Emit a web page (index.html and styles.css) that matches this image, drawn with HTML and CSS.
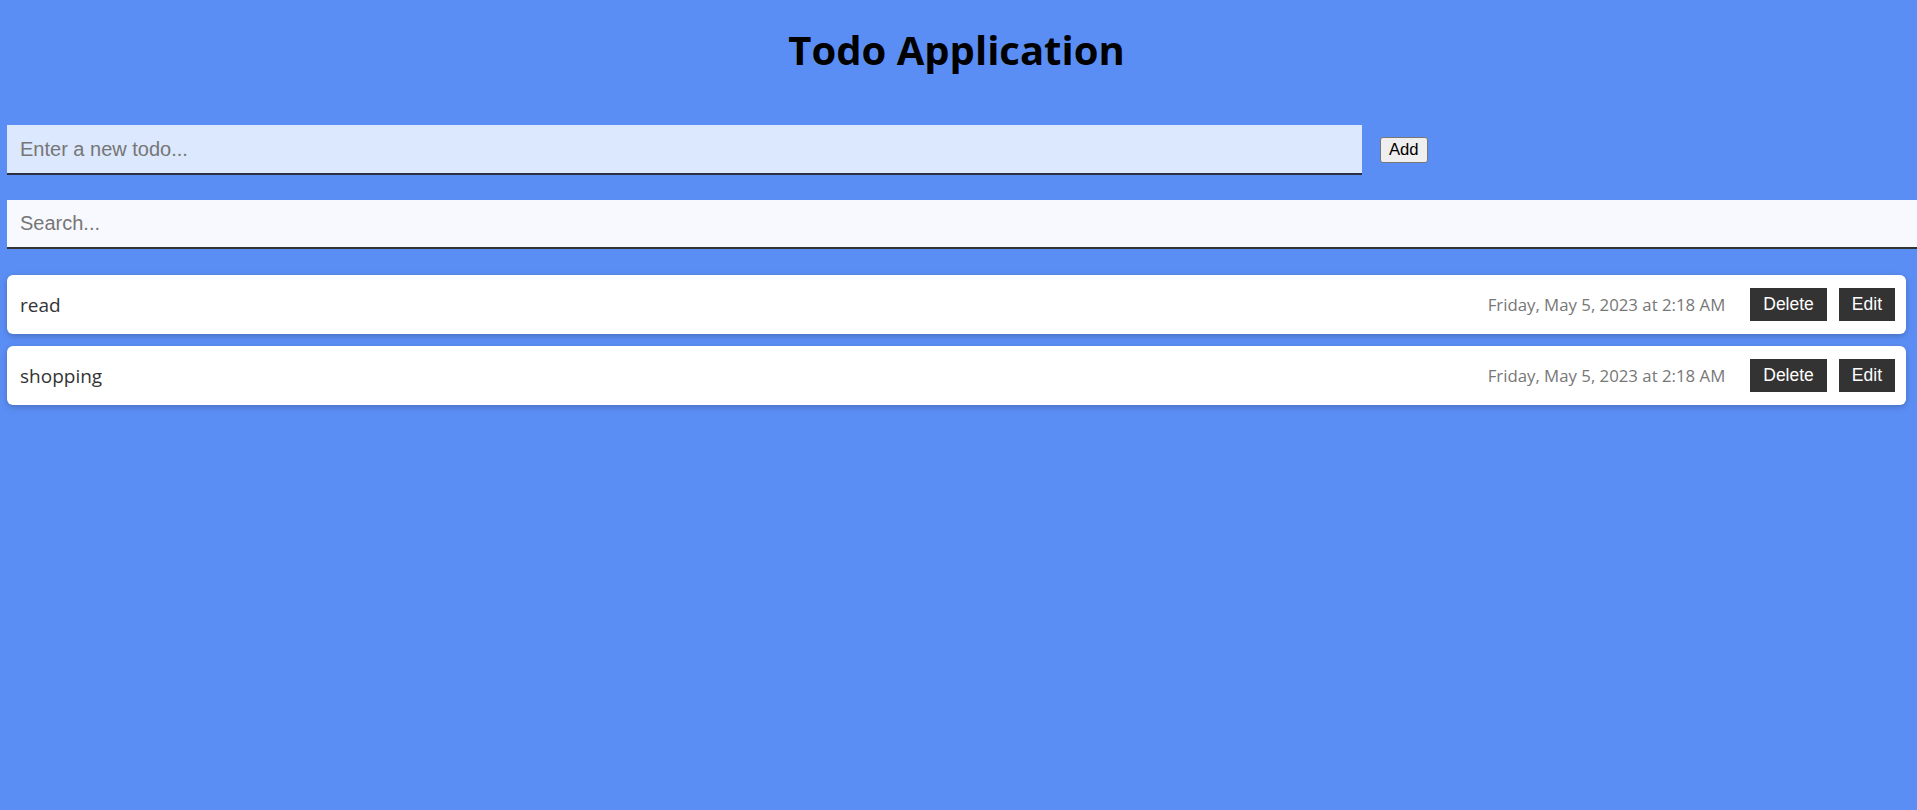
FILE: index.html
```html
<!DOCTYPE html>
<html lang="en">
<head>
<meta charset="utf-8">
<title>Todo Application</title>
<link rel="stylesheet" href="styles.css">
</head>
<body>
<div class="app">
  <h1 class="title">Todo Application</h1>
  <div class="add-row">
    <input class="new-input" type="text" placeholder="Enter a new todo...">
    <button class="add-btn">Add</button>
  </div>
  <input class="search-input" type="text" placeholder="Search...">
  <ul class="todo-list">
    <li class="todo-item">
      <span class="todo-text">read</span>
      <span class="todo-date">Friday, May 5, 2023 at 2:18 AM</span>
      <button class="action-btn delete-btn">Delete</button>
      <button class="action-btn edit-btn">Edit</button>
    </li>
    <li class="todo-item">
      <span class="todo-text">shopping</span>
      <span class="todo-date">Friday, May 5, 2023 at 2:18 AM</span>
      <button class="action-btn delete-btn">Delete</button>
      <button class="action-btn edit-btn">Edit</button>
    </li>
  </ul>
</div>
</body>
</html>
```
FILE: styles.css
```css
html, body {
  margin: 0;
  padding: 0;
}
body {
  background: #5b8ef5;
  overflow: hidden;
  font-family: "Open Sans", "Noto Sans", sans-serif;
  height: 810px;
}
.app {
  padding: 0 11px 0 7px;
}
.title {
  margin: 0;
  padding-top: 22px;
  height: 108px;
  box-sizing: border-box;
  text-align: center;
  font-family: "Open Sans", "Noto Sans", sans-serif;
  font-weight: 700;
  font-size: 40px;
  line-height: 56px;
  color: #000;
}
.add-row {
  display: flex;
  align-items: center;
  margin-top: 17px;
}
.new-input {
  width: 1355px;
  height: 50px;
  box-sizing: border-box;
  border: none;
  border-bottom: 2px solid #2b2f3f;
  background: #dce8fd;
  padding: 0 13px;
  font-family: "Liberation Sans", Arial, sans-serif;
  font-size: 20px;
  color: #222;
  outline: none;
}
.new-input::placeholder,
.search-input::placeholder {
  color: #767676;
}
.add-btn {
  margin-left: 18px;
  height: 26px;
  padding: 0 8px;
  border: 1px solid #767676;
  border-radius: 3px;
  background: #efefef;
  font-family: "Liberation Sans", Arial, sans-serif;
  font-size: 16.67px;
  color: #000;
}
.search-input {
  display: block;
  margin-top: 25px;
  width: 1930px;
  height: 49px;
  box-sizing: border-box;
  border: none;
  border-bottom: 2px solid #333;
  background: #f8f9fe;
  padding: 0 13px;
  font-family: "Liberation Sans", Arial, sans-serif;
  font-size: 20px;
  outline: none;
}
.todo-list {
  list-style: none;
  margin: 26px 0 0;
  padding: 0;
  display: flex;
  flex-direction: column;
  gap: 12px;
}
.todo-item {
  display: flex;
  align-items: center;
  height: 59px;
  box-sizing: border-box;
  padding: 0 11px 0 13px;
  background: #fff;
  border-radius: 6px;
  box-shadow: 0 2px 6px rgba(0, 0, 0, 0.22);
}
.todo-text {
  flex: 1;
  font-size: 19px;
  color: #333;
}
.todo-date {
  font-size: 16.8px;
  color: #777;
  margin-right: 25px;
}
.action-btn {
  height: 33px;
  padding: 0 13px;
  border: none;
  background: #333;
  color: #fff;
  font-family: "Liberation Sans", Arial, sans-serif;
  font-size: 17.5px;
}
.edit-btn {
  margin-left: 12px;
}
```
